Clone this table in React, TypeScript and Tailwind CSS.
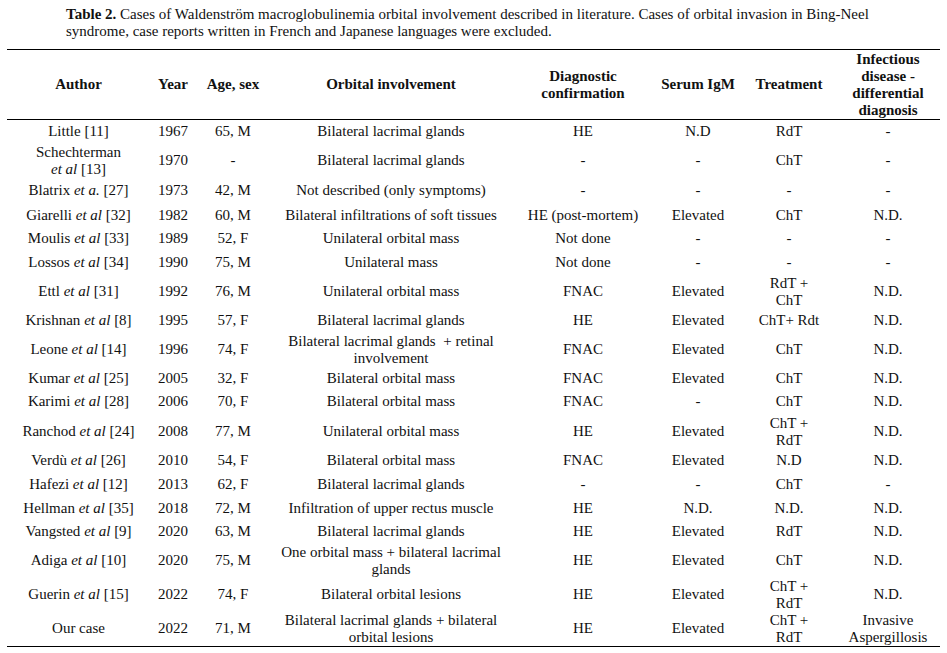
import React from "react";

type Row = {
  h: string;
  author: React.ReactNode;
  year: string;
  age: string;
  orbital: React.ReactNode;
  diag: string;
  igm: string;
  treat: React.ReactNode;
  infect: React.ReactNode;
};

const Et = ({ t = "et al" }: { t?: string }) => <i>{t}</i>;

const rows: Row[] = [
  { h: "h-[24px]", author: "Little [11]", year: "1967", age: "65, M", orbital: "Bilateral lacrimal glands", diag: "HE", igm: "N.D", treat: "RdT", infect: "-" },
  {
    h: "h-[34px]",
    author: (
      <>
        Schechterman
        <br />
        <Et /> [13]
      </>
    ),
    year: "1970",
    age: "-",
    orbital: "Bilateral lacrimal glands",
    diag: "-",
    igm: "-",
    treat: "ChT",
    infect: "-",
  },
  { h: "h-[26px]", author: <>Blatrix <Et t="et a." /> [27]</>, year: "1973", age: "42, M", orbital: "Not described (only symptoms)", diag: "-", igm: "-", treat: "-", infect: "-" },
  { h: "h-[23px]", author: <>Giarelli <Et /> [32]</>, year: "1982", age: "60, M", orbital: "Bilateral infiltrations of soft tissues", diag: "HE (post-mortem)", igm: "Elevated", treat: "ChT", infect: "N.D." },
  { h: "h-[24px]", author: <>Moulis <Et /> [33]</>, year: "1989", age: "52, F", orbital: "Unilateral orbital mass", diag: "Not done", igm: "-", treat: "-", infect: "-" },
  { h: "h-[23px]", author: <>Lossos <Et /> [34]</>, year: "1990", age: "75, M", orbital: "Unilateral mass", diag: "Not done", igm: "-", treat: "-", infect: "-" },
  {
    h: "h-[36px]",
    author: <>Ettl <Et /> [31]</>,
    year: "1992",
    age: "76, M",
    orbital: "Unilateral orbital mass",
    diag: "FNAC",
    igm: "Elevated",
    treat: (
      <>
        RdT +<br />
        ChT
      </>
    ),
    infect: "N.D.",
  },
  { h: "h-[22px]", author: <>Krishnan <Et /> [8]</>, year: "1995", age: "57, F", orbital: "Bilateral lacrimal glands", diag: "HE", igm: "Elevated", treat: "ChT+ Rdt", infect: "N.D." },
  {
    h: "h-[36px]",
    author: <>Leone <Et /> [14]</>,
    year: "1996",
    age: "74, F",
    orbital: (
      <>
        Bilateral lacrimal glands&nbsp; + retinal
        <br />
        involvement
      </>
    ),
    diag: "FNAC",
    igm: "Elevated",
    treat: "ChT",
    infect: "N.D.",
  },
  { h: "h-[22px]", author: <>Kumar <Et /> [25]</>, year: "2005", age: "32, F", orbital: "Bilateral orbital mass", diag: "FNAC", igm: "Elevated", treat: "ChT", infect: "N.D." },
  { h: "h-[24px]", author: <>Karimi <Et /> [28]</>, year: "2006", age: "70, F", orbital: "Bilateral orbital mass", diag: "FNAC", igm: "-", treat: "ChT", infect: "N.D." },
  {
    h: "h-[36px]",
    author: <>Ranchod <Et /> [24]</>,
    year: "2008",
    age: "77, M",
    orbital: "Unilateral orbital mass",
    diag: "HE",
    igm: "Elevated",
    treat: (
      <>
        ChT +<br />
        RdT
      </>
    ),
    infect: "N.D.",
  },
  { h: "h-[22px]", author: <>Verdù <Et /> [26]</>, year: "2010", age: "54, F", orbital: "Bilateral orbital mass", diag: "FNAC", igm: "Elevated", treat: "N.D", infect: "N.D." },
  { h: "h-[25px]", author: <>Hafezi <Et /> [12]</>, year: "2013", age: "62, F", orbital: "Bilateral lacrimal glands", diag: "-", igm: "-", treat: "ChT", infect: "-" },
  { h: "h-[23px]", author: <>Hellman <Et /> [35]</>, year: "2018", age: "72, M", orbital: "Infiltration of upper rectus muscle", diag: "HE", igm: "N.D.", treat: "N.D.", infect: "N.D." },
  { h: "h-[24px]", author: <>Vangsted <Et /> [9]</>, year: "2020", age: "63, M", orbital: "Bilateral lacrimal glands", diag: "HE", igm: "Elevated", treat: "RdT", infect: "N.D." },
  {
    h: "h-[34px]",
    author: <>Adiga <Et /> [10]</>,
    year: "2020",
    age: "75, M",
    orbital: (
      <>
        One orbital mass + bilateral lacrimal
        <br />
        glands
      </>
    ),
    diag: "HE",
    igm: "Elevated",
    treat: "ChT",
    infect: "N.D.",
  },
  {
    h: "h-[34px]",
    author: <>Guerin <Et /> [15]</>,
    year: "2022",
    age: "74, F",
    orbital: "Bilateral orbital lesions",
    diag: "HE",
    igm: "Elevated",
    treat: (
      <>
        ChT +<br />
        RdT
      </>
    ),
    infect: "N.D.",
  },
  {
    h: "h-[35px]",
    author: "Our case",
    year: "2022",
    age: "71, M",
    orbital: (
      <>
        Bilateral lacrimal glands + bilateral
        <br />
        orbital lesions
      </>
    ),
    diag: "HE",
    igm: "Elevated",
    treat: (
      <>
        ChT +<br />
        RdT
      </>
    ),
    infect: (
      <>
        Invasive
        <br />
        Aspergillosis
      </>
    ),
  },
];

const headers: React.ReactNode[] = [
  "Author",
  "Year",
  "Age, sex",
  "Orbital involvement",
  <>
    Diagnostic
    <br />
    confirmation
  </>,
  "Serum IgM",
  "Treatment",
  <>
    Infectious
    <br />
    disease -<br />
    differential
    <br />
    diagnosis
  </>,
];

export default function App() {
  return (
    <div className="min-h-[653px] w-[947px] bg-white font-['Liberation_Serif',serif] text-[15px] leading-[17px] text-[#111]">
      <p className="pl-[66px] pt-[6px]">
        <b>Table 2.</b> Cases of Waldenström macroglobulinemia orbital involvement described in literature. Cases of orbital invasion in Bing-Neel
        <br />
        syndrome, case reports written in French and Japanese languages were excluded.
      </p>

      <table className="ml-[7px] mt-[9px] w-[933px] table-fixed border-collapse">
        <colgroup>
          <col className="w-[143px]" />
          <col className="w-[46px]" />
          <col className="w-[74px]" />
          <col className="w-[242px]" />
          <col className="w-[142px]" />
          <col className="w-[88px]" />
          <col className="w-[94px]" />
          <col className="w-[104px]" />
        </colgroup>
        <thead>
          <tr className="h-[70px] border-y-[1.5px] border-black">
            {headers.map((h, i) => (
              <th key={i} className="whitespace-nowrap p-0 text-center align-middle font-bold">
                {h}
              </th>
            ))}
          </tr>
        </thead>
        <tbody className="border-b-[1.5px] border-black">
          {rows.map((r, i) => (
            <tr key={i} className={r.h}>
              {[r.author, r.year, r.age, r.orbital, r.diag, r.igm, r.treat, r.infect].map((c, j) => (
                <td key={j} className="whitespace-nowrap p-0 text-center align-middle">
                  {c}
                </td>
              ))}
            </tr>
          ))}
        </tbody>
      </table>
    </div>
  );
}
